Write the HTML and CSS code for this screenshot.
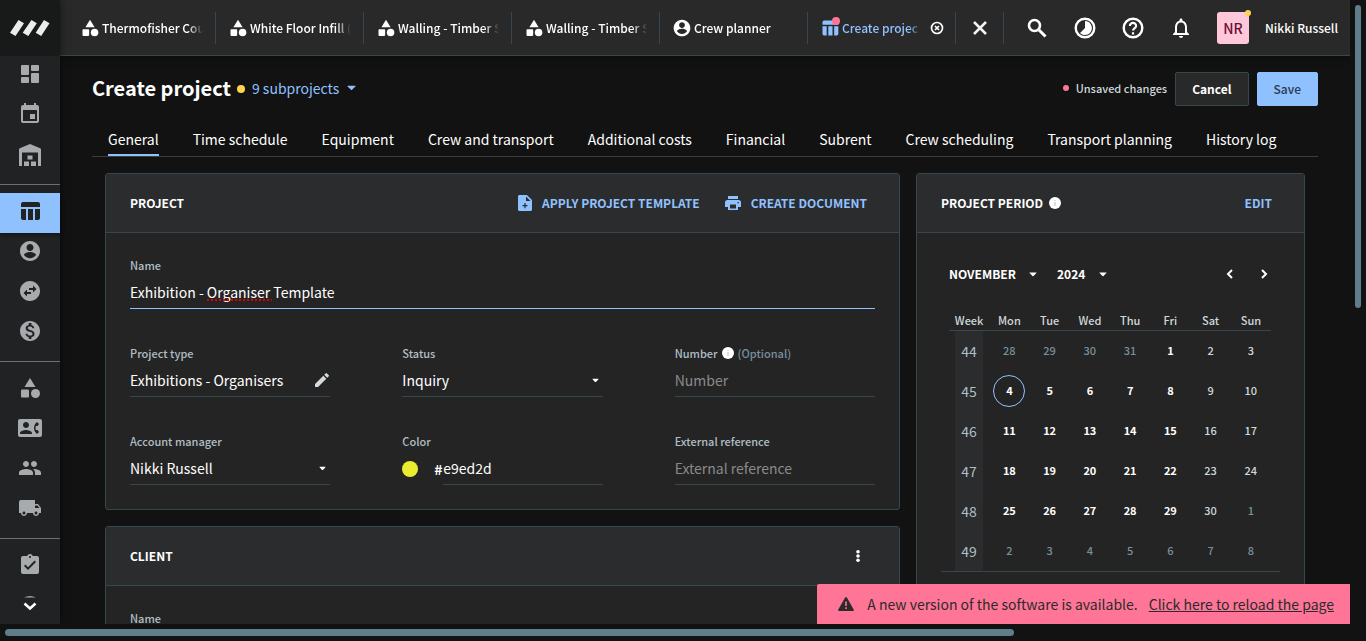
FILE: index.html
```html
<!DOCTYPE html>
<html lang="en">
<head>
<meta charset="utf-8">
<title>Create project</title>
<link rel="stylesheet" href="styles.css">
</head>
<body>
<svg class="defs" aria-hidden="true">
  <symbol id="i-shapes" viewBox="0 0 24 24"><path d="M12 2l-5.500 9h11z"/><circle cx="17.500" cy="17.500" r="4.500"/><rect x="3" y="13.500" width="8" height="8" rx="1"/></symbol>
  <symbol id="i-person" viewBox="0 0 24 24"><path d="M12 2C6.480 2 2 6.480 2 12s4.480 10 10 10 10-4.480 10-10S17.520 2 12 2zm0 3c1.930 0 3.500 1.570 3.500 3.500S13.930 12 12 12s-3.500-1.570-3.500-3.500S10.070 5 12 5zm0 14.200c-2.500 0-4.710-1.280-6-3.220.030-1.990 4-3.080 6-3.080 1.990 0 5.970 1.090 6 3.080-1.290 1.940-3.500 3.220-6 3.220z"/></symbol>
  <symbol id="i-table" viewBox="0 0 24 24"><path d="M10 10.020h5V21h-5V10.020zM17 21h3c1.100 0 2-.9 2-2v-9h-5v11zm3-18H5c-1.100 0-2 .9-2 2v3h19V5c0-1.100-.9-2-2-2zM3 19c0 1.100.9 2 2 2h3V10H3v9z"/></symbol>
  <symbol id="i-caret" viewBox="0 0 10 6"><path d="M1 0.500h8q.8 0 .3.700L5.600 5q-.6.600-1.200 0L.7 1.200Q.2.500 1 .5z"/></symbol>
  <symbol id="i-info" viewBox="0 0 12 12"><circle cx="6" cy="6" r="6"/><path d="M5.500 5h1v4h-1zM5.500 3h1v1h-1z" fill="#bbb"/></symbol>
</svg>
<div class="viewport">
  <div class="app">
    <aside class="sidebar">
      <a class="logo" href="#" aria-label="Home"><svg viewBox="0 0 40 16" width="40" height="16"><path d="M8.500 0L14 3.200 5.500 16 0 12.800zM21.500 0l5.300 3.200L18.300 16l-5.600-3.200zM34 0l5.500 3.200L31.200 16l-5.500-3.200z"/></svg></a>
      <nav class="side-nav" aria-label="Modules">
        <a class="side-item" href="#" aria-label="Dashboard"><svg viewBox="0 0 24 24"><path d="M4 3h6a1 1 0 011 1v8a1 1 0 01-1 1H4a1 1 0 01-1-1V4a1 1 0 011-1zM4 15h6a1 1 0 011 1v4a1 1 0 01-1 1H4a1 1 0 01-1-1v-4a1 1 0 011-1zM14 11h6a1 1 0 011 1v8a1 1 0 01-1 1h-6a1 1 0 01-1-1v-8a1 1 0 011-1zM14 3h6a1 1 0 011 1v4a1 1 0 01-1 1h-6a1 1 0 01-1-1V4a1 1 0 011-1z"/></svg></a>
        <a class="side-item" href="#" aria-label="Calendar"><svg viewBox="0 0 24 24"><path d="M17 12h-5v5h5v-5zM16 1v2H8V1H6v2H5c-1.110 0-1.990.9-1.990 2L3 19c0 1.100.890 2 2 2h14c1.100 0 2-.9 2-2V5c0-1.100-.9-2-2-2h-1V1h-2zm3 18H5V8h14v11z"/></svg></a>
        <a class="side-item" href="#" aria-label="Warehouse"><svg viewBox="0 -2 24 24"><path d="M1 22V5.500Q1 4.700 1.800 4.300L12 0l10.200 4.300q.8.400.8 1.200V22h-3V8.500H4V22zM9.500 11.500h5v4h-5zM6 17.500h5V22H6zM13 17.500h5V22h-5z"/></svg></a>
        <hr>
        <a class="side-item is-active" href="#" aria-label="Projects" aria-current="page"><svg><use href="#i-table"/></svg></a>
        <a class="side-item" href="#" aria-label="Crew planner"><svg><use href="#i-person"/></svg></a>
        <a class="side-item" href="#" aria-label="Subrent"><svg viewBox="0 0 24 24"><path d="M22 12c0-5.520-4.480-10-10-10S2 6.480 2 12s4.480 10 10 10 10-4.480 10-10zm-7-5.500l3.500 3.500-3.500 3.500V11h-4V9h4V6.500zm-6 11L5.500 14 9 10.500V13h4v2H9v2.500z"/></svg></a>
        <a class="side-item" href="#" aria-label="Invoices"><svg viewBox="0 0 24 24"><path d="M12 2C6.480 2 2 6.480 2 12s4.480 10 10 10 10-4.480 10-10S17.520 2 12 2zm1.410 16.090V20h-2.670v-1.930c-1.710-.360-3.160-1.460-3.270-3.400h1.960c.1 1.050.820 1.870 2.650 1.870 1.960 0 2.400-.980 2.400-1.590 0-.830-.440-1.610-2.670-2.140-2.480-.6-4.180-1.620-4.180-3.670 0-1.720 1.390-2.840 3.110-3.210V4h2.670v1.950c1.860.450 2.790 1.860 2.850 3.390H14.300c-.050-1.110-.640-1.870-2.220-1.870-1.500 0-2.400.680-2.400 1.640 0 .840.650 1.390 2.670 1.910s4.180 1.390 4.180 3.910c-.010 1.830-1.380 2.830-3.120 3.160z"/></svg></a>
        <hr>
        <a class="side-item" href="#" aria-label="Equipment"><svg><use href="#i-shapes"/></svg></a>
        <a class="side-item" href="#" aria-label="Contacts"><svg viewBox="0 0 24 24"><path d="M22 3H2C.9 3 0 3.900 0 5v14c0 1.100.9 2 2 2h20c1.100 0 2-.9 2-2V5c0-1.100-.9-2-2-2zM8 6c1.660 0 3 1.340 3 3s-1.340 3-3 3-3-1.340-3-3 1.340-3 3-3zm6 12H2v-1c0-2 4-3.100 6-3.100s6 1.100 6 3.100v1zm3.850-4h1.640L21 16l-1.990 1.990A7.500 7.500 0 0116.280 14c-.180-.640-.280-1.310-.280-2s.1-1.360.280-2a7.500 7.500 0 012.730-3.990L21 8l-1.510 2h-1.640c-.220.630-.350 1.300-.350 2s.130 1.370.350 2z"/></svg></a>
        <a class="side-item" href="#" aria-label="Crew"><svg viewBox="0 0 24 24"><path d="M16 11c1.660 0 2.990-1.340 2.990-3S17.660 5 16 5s-3 1.340-3 3 1.340 3 3 3zm-8 0c1.660 0 2.990-1.340 2.990-3S9.660 5 8 5 5 6.340 5 8s1.340 3 3 3zm0 2c-2.330 0-7 1.170-7 3.500V19h14v-2.500c0-2.330-4.670-3.500-7-3.500zm8 0c-.290 0-.620.020-.970.050 1.160.840 1.970 1.970 1.970 3.450V19h6v-2.500c0-2.330-4.670-3.500-7-3.500z"/></svg></a>
        <a class="side-item" href="#" aria-label="Vehicles"><svg viewBox="0 0 24 24"><path d="M20 8h-3V4H3c-1.100 0-2 .9-2 2v11h2c0 1.660 1.340 3 3 3s3-1.340 3-3h6c0 1.660 1.340 3 3 3s3-1.340 3-3h2v-5l-3-4zM6 18.500c-.830 0-1.500-.670-1.500-1.500s.670-1.500 1.500-1.500 1.500.670 1.500 1.500-.670 1.500-1.500 1.500zm13.500-9l1.960 2.500H17V9.500h2.500zm-1.500 9c-.830 0-1.500-.670-1.500-1.500s.670-1.500 1.500-1.500 1.500.670 1.500 1.500-.670 1.500-1.500 1.500z"/></svg></a>
        <hr>
        <a class="side-item" href="#" aria-label="Tasks"><svg viewBox="0 0 24 24"><path d="M19 3h-4.180C14.400 1.840 13.300 1 12 1c-1.300 0-2.400.840-2.820 2H5c-1.100 0-2 .9-2 2v14c0 1.100.9 2 2 2h14c1.100 0 2-.9 2-2V5c0-1.100-.9-2-2-2zm-7 0c.550 0 1 .450 1 1s-.450 1-1 1-1-.450-1-1 .450-1 1-1zm-2 14l-4-4 1.410-1.410L10 14.170l6.590-6.590L18 9l-8 8z"/></svg></a>
        <button class="side-more" type="button" aria-label="More"><svg viewBox="0 0 14 16" width="14" height="16"><path d="M1 2.500Q7-.5 13 2.500z" fill="#a8abad"/><path d="M1.500 8.500L7 13.500l5.500-5" fill="none" stroke="#fff" stroke-width="2.500"/></svg></button>
      </nav>
    </aside>
    <div class="page">
      <header class="topbar">
        <nav class="open-tabs" aria-label="Open pages">
          <a class="open-tab" href="#"><svg><use href="#i-shapes"/></svg><span>Thermofisher Cou</span></a>
          <a class="open-tab" href="#"><svg><use href="#i-shapes"/></svg><span>White Floor Infill (</span></a>
          <a class="open-tab" href="#"><svg><use href="#i-shapes"/></svg><span>Walling - Timber S</span></a>
          <a class="open-tab" href="#"><svg><use href="#i-shapes"/></svg><span>Walling - Timber S</span></a>
          <a class="open-tab" href="#"><svg><use href="#i-person"/></svg><span>Crew planner</span></a>
          <div class="open-tab is-current"><svg><use href="#i-table"/></svg><i class="tab-dot"></i><span>Create projec</span><button type="button" aria-label="Close tab"><svg viewBox="0 0 14 14" stroke="#fff"><circle cx="7" cy="7" r="5.500" stroke-width="1.700"/><path d="M5 5l4 4M9 5L5 9" stroke-width="1.700"/></svg></button></div>
        </nav>
        <button class="close-all" type="button" aria-label="Close all tabs"><svg viewBox="0 0 16 16" width="16" height="16"><path d="M2 2l12 12M14 2L2 14" stroke="#f2f2f2" stroke-width="2.500"/></svg></button>
        <div class="tools">
          <button type="button" aria-label="Search"><svg viewBox="0 0 24 24"><circle cx="9.500" cy="9.500" r="5.500" fill="none" stroke="#fff" stroke-width="2.600"/><path d="M14 14l6.500 6.500" stroke="#fff" stroke-width="3"/></svg></button>
          <button type="button" aria-label="Time registration"><svg viewBox="0 0 24 24"><circle cx="12" cy="12" r="9.300" fill="none" stroke="#fff" stroke-width="2.400"/><path d="M12 5v7l-5 5a7 7 0 105-12z"/></svg></button>
          <button type="button" aria-label="Help"><svg viewBox="0 0 24 24"><circle cx="12" cy="12" r="9.300" fill="none" stroke="#fff" stroke-width="2.400"/><path fill="none" stroke="#fff" d="M8.900 10a3.100 3.100 0 116.200 0c0 2-3.100 2.200-3.100 4.600M12 16.200v2.200" stroke-width="2.200"/></svg></button>
          <button type="button" aria-label="Notifications"><svg viewBox="0 0 24 24"><path d="M12 22c1.100 0 2-.9 2-2h-4c0 1.100.9 2 2 2zm6-6v-5c0-3.070-1.630-5.640-4.500-6.320V4c0-.830-.670-1.500-1.500-1.500s-1.500.670-1.500 1.500v.680C7.640 5.360 6 7.920 6 11v5l-2 2v1h16v-1l-2-2zm-2 1H8v-6c0-2.480 1.510-4.500 4-4.500s4 2.020 4 4.500v6z"/></svg></button>
        </div>
        <button class="user" type="button"><span class="avatar">NR<i class="status-dot"></i></span><span>Nikki Russell</span></button>
      </header>
      <main class="main">
        <div class="title-row">
          <h1>Create project</h1>
          <i class="dot dot-yellow"></i>
          <button class="subprojects" type="button">9 subprojects<svg width="9" height="6"><use href="#i-caret"/></svg></button>
          <p class="unsaved"><i class="dot dot-pink"></i>Unsaved changes</p>
          <button class="btn" type="button">Cancel</button>
          <button class="btn btn-primary" type="button">Save</button>
        </div>
        <nav class="section-tabs" aria-label="Project sections">
          <a class="is-selected" href="#">General</a><a href="#">Time schedule</a><a href="#">Equipment</a><a href="#">Crew and transport</a><a href="#">Additional costs</a><a href="#">Financial</a><a href="#">Subrent</a><a href="#">Crew scheduling</a><a href="#">Transport planning</a><a href="#">History log</a>
        </nav>
        <div class="columns">
          <div class="column">
            <section class="card">
              <header class="card-head">
                <h2>Project</h2>
                <button class="link-btn" type="button"><svg viewBox="0 0 14 16" width="14" height="16"><path fill-rule="evenodd" d="M2 0h7l5 5v9.500a1.500 1.500 0 01-1.500 1.500h-11A1.500 1.500 0 010 14.500v-13A1.500 1.500 0 012 0zM8 1.500V6h4.500zM6.400 8v2H4.500v1.200h1.900v2h1.200v-2h1.900V10H7.600V8z"/></svg>Apply project template</button>
                <button class="link-btn" type="button"><svg viewBox="0 0 16 14" width="16" height="14"><path fill-rule="evenodd" d="M3 0h10v3H3zM2.500 4h11A2.500 2.500 0 0116 6.500V11h-3v3H3v-3H0V6.500A2.500 2.500 0 012.500 4zM5 8.500v4h6v-4zM12.500 6v1.200h1.300V6z"/></svg>Create document</button>
              </header>
              <div class="card-body form">
                <div class="field field-wide is-focused">
                  <label for="name">Name</label>
                  <div class="control"><input id="name" type="text" value="Exhibition - Organiser Template" spellcheck="false"><i class="misspelled"></i></div>
                </div>
                <div class="field">
                  <label for="type">Project type</label>
                  <div class="control"><input id="type" type="text" value="Exhibitions - Organisers" readonly><button class="edit" type="button" aria-label="Edit project type"><svg viewBox="0 0 14 14" width="14" height="14"><path d="M0 11L8.300 2.700l3 3L3 14H0zM9.200 1.800L10.600.4q.7-.7 1.400 0l1.600 1.600q.7.700 0 1.400l-1.400 1.400z"/></svg></button></div>
                </div>
                <div class="field">
                  <label for="status">Status</label>
                  <div class="control"><select id="status"><option>Inquiry</option></select><svg class="caret" width="7" height="5"><use href="#i-caret"/></svg></div>
                </div>
                <div class="field">
                  <label for="number">Number <svg width="12" height="12"><use href="#i-info"/></svg> <span class="optional">(Optional)</span></label>
                  <div class="control"><input id="number" type="text" placeholder="Number"></div>
                </div>
                <div class="field">
                  <label for="manager">Account manager</label>
                  <div class="control"><select id="manager"><option>Nikki Russell</option></select><svg class="caret" width="7" height="5"><use href="#i-caret"/></svg></div>
                </div>
                <div class="field">
                  <label for="color">Color</label>
                  <div class="color-control"><i class="swatch"></i><span class="hash">#</span><div class="control"><input id="color" type="text" value="e9ed2d"></div></div>
                </div>
                <div class="field">
                  <label for="external">External reference</label>
                  <div class="control"><input id="external" type="text" placeholder="External reference"></div>
                </div>
              </div>
            </section>
            <section class="card">
              <header class="card-head">
                <h2>Client</h2>
                <button class="kebab" type="button" aria-label="Client actions"><svg viewBox="0 0 4 12" width="4" height="12"><circle cx="2" cy="1.800" r="1.800"/><circle cx="2" cy="6" r="1.800"/><circle cx="2" cy="10.200" r="1.800"/></svg></button>
              </header>
              <div class="card-body form">
                <div class="field field-wide"><label for="client">Name</label><div class="control"><input id="client" type="text"></div></div>
              </div>
            </section>
          </div>
          <section class="card">
            <header class="card-head">
              <h2>Project period <svg width="12" height="12"><use href="#i-info"/></svg></h2>
              <button class="link-btn" type="button">Edit</button>
            </header>
            <div class="card-body">
              <div class="calendar">
                <div class="calendar-nav">
                  <span class="picker"><select aria-label="Month"><option>NOVEMBER</option></select><svg width="8" height="5"><use href="#i-caret"/></svg></span>
                  <span class="picker"><select aria-label="Year"><option>2024</option></select><svg width="8" height="5"><use href="#i-caret"/></svg></span>
                  <span class="steps">
                    <button type="button" aria-label="Previous month"><svg viewBox="0 0 8 10" width="8" height="10"><path d="M6 1L2 5l4 4"/></svg></button>
                    <button type="button" aria-label="Next month"><svg viewBox="0 0 8 10" width="8" height="10"><path d="M2 1l4 4-4 4"/></svg></button>
                  </span>
                </div>
                <table>
                  <thead><tr><th>Week</th><th>Mon</th><th>Tue</th><th>Wed</th><th>Thu</th><th>Fri</th><th>Sat</th><th>Sun</th></tr></thead>
                  <tbody>
                    <tr><th>44</th><td class="out">28</td><td class="out">29</td><td class="out">30</td><td class="out">31</td><td>1</td><td>2</td><td>3</td></tr>
                    <tr><th>45</th><td class="today"><span>4</span></td><td>5</td><td>6</td><td>7</td><td>8</td><td>9</td><td>10</td></tr>
                    <tr><th>46</th><td>11</td><td>12</td><td>13</td><td>14</td><td>15</td><td>16</td><td>17</td></tr>
                    <tr><th>47</th><td>18</td><td>19</td><td>20</td><td>21</td><td>22</td><td>23</td><td>24</td></tr>
                    <tr><th>48</th><td>25</td><td>26</td><td>27</td><td>28</td><td>29</td><td>30</td><td class="out">1</td></tr>
                    <tr><th>49</th><td class="out">2</td><td class="out">3</td><td class="out">4</td><td class="out">5</td><td class="out">6</td><td class="out">7</td><td class="out">8</td></tr>
                  </tbody>
                </table>
              </div>
            </div>
          </section>
        </div>
      </main>
    </div>
    <div class="toast" role="status"><svg viewBox="0 0 16 14" width="16" height="14"><path fill="#2b2b2b" d="M7 .8q1-1.600 2 0l6.700 11.600q.8 1.600-1 1.600H1.300q-1.800 0-1-1.600z"/><path fill="#ff7597" d="M7.200 4.500h1.600V9H7.200zM7.200 10.300h1.600v1.600H7.200z"/></svg><span>A new version of the software is available.</span><a href="#">Click here to reload the page</a></div>
  </div>
  <div class="scroll scroll-y"><i></i></div>
  <div class="scroll scroll-x"><i></i></div>
</div>
</body>
</html>
```
FILE: styles.css
```css
* { box-sizing: border-box; }
body {
  margin: 0;
  background: #121212;
  color: #fff;
  font: 14px/20px "Noto Sans CJK SC", "Open Sans", sans-serif;
}
.defs { display: none; }
a { color: inherit; text-decoration: none; }
button, input, select {
  font: inherit;
  color: inherit;
  background: none;
  border: 0;
  padding: 0;
  margin: 0;
  outline: 0;
  border-radius: 0;
}
select { appearance: none; }
svg { display: block; fill: currentColor; flex: none; }
h1, h2, p { margin: 0; }

.viewport {
  display: grid;
  grid-template: minmax(0, 1fr) 17px / minmax(0, 1fr) 16px;
  height: 100vh;
}
.app { position: relative; display: flex; overflow: hidden; }
.scroll-y { padding: 5px 5px 0; }
.scroll-x { grid-row: 2; padding: 5px 0 0 5px; }
.scroll i { display: block; background: #607d8b; border-radius: 4px; }
.scroll-y i { width: 6px; height: 49%; }
.scroll-x i { width: 75%; height: 7px; }

/* Sidebar */
.sidebar {
  flex: none;
  width: 60px;
  background: #202224;
  color: #a8abad;
  box-shadow: 0 0 8px rgba(0, 0, 0, .5);
  z-index: 1;
}
.logo {
  display: flex;
  align-items: center;
  justify-content: center;
  height: 56px;
  background: #181a19;
  color: #ececec;
}
.side-item {
  display: flex;
  align-items: center;
  justify-content: center;
  height: 40px;
  padding-bottom: 4px;
}
.side-item svg { width: 24px; height: 24px; }
.side-item.is-active {
  background: #90c1ff;
  color: #212325;
  box-shadow: 0 2px 4px rgba(0, 0, 0, .4);
}
.side-nav hr { margin: 8px 0; border: 0; border-top: 1px solid #6e7072; }
.side-more { display: flex; justify-content: center; width: 100%; padding-top: 8px; }

/* Top bar */
.page { flex: 1; min-width: 0; }
.topbar {
  display: flex;
  align-items: center;
  height: 56px;
  padding: 0 12px 0 8px;
  background: #292929;
  border-bottom: 1px solid #37474f;
  box-shadow: 0 2px 8px rgba(0, 0, 0, .4);
  font-size: 12px;
  font-weight: 500;
}
.open-tabs { display: flex; }
.open-tab {
  position: relative;
  display: flex;
  align-items: center;
  gap: 2px;
  width: 148px;
  height: 32px;
  padding: 0 12px 0 12px;
  border-right: 1px solid #37474f;
}
.open-tab > svg { width: 20px; height: 20px; }
.open-tab span {
  flex: 1;
  overflow: hidden;
  white-space: nowrap;
  mask-image: linear-gradient(to right, #000 85%, transparent);
}
.open-tab.is-current { padding-right: 11px; color: #90c1ff; }
.tab-dot {
  position: absolute;
  left: 24px;
  top: 5px;
  width: 8px;
  height: 8px;
  border-radius: 50%;
  background: #ff7597;
}
.open-tab button { margin-left: 7px; }
.open-tab button svg { width: 14px; height: 14px; fill: none; }
.close-all {
  display: flex;
  align-items: center;
  justify-content: center;
  width: 48px;
  height: 32px;
  border-right: 1px solid #37474f;
}
.tools { display: flex; margin-left: auto; }
.tools button { display: flex; justify-content: center; width: 48px; }
.tools svg { width: 24px; height: 24px; }
.user { display: flex; align-items: center; gap: 16px; padding-left: 12px; }
.avatar {
  position: relative;
  width: 32px;
  height: 32px;
  border-radius: 3px;
  background: #ffc8da;
  color: #6d0f35;
  font-size: 14px;
  line-height: 32px;
}
.status-dot {
  position: absolute;
  right: -2px;
  top: -2px;
  width: 6px;
  height: 6px;
  border-radius: 50%;
  background: #ffd54f;
}

/* Page heading */
.main { padding: 16px 32px 0; }
.title-row { display: flex; align-items: center; height: 34px; }
h1 { padding-bottom: 2px; font-size: 20px; line-height: 32px; }
.dot { display: block; border-radius: 50%; }
.dot-yellow { width: 8px; height: 8px; margin: 0 7px 0 6px; background: #ffd54f; }
.dot-pink { width: 6px; height: 6px; background: #ff7597; }
.subprojects { display: flex; align-items: center; gap: 8px; padding-bottom: 2px; color: #90c1ff; }
.unsaved {
  display: flex;
  align-items: center;
  gap: 7px;
  margin-left: auto;
  padding-bottom: 2px;
  color: #cfd8dc;
  font-size: 11px;
  font-weight: 500;
}
.btn {
  height: 34px;
  margin-left: 8px;
  padding: 0 16px;
  border: 1px solid #37474f;
  border-radius: 2px;
  background: #292929;
  font-size: 12px;
  font-weight: 700;
}
.btn-primary { background: #90c1ff; border-color: #90c1ff; color: #2b3a4d; font-weight: 500; }
.section-tabs {
  display: flex;
  gap: 34px;
  margin-top: 18px;
  padding: 0 16px;
  border-bottom: 1px solid #3d3d3d;
  white-space: nowrap;
}
.section-tabs a { padding: 5px 0; border-bottom: 2px solid transparent; }
.section-tabs .is-selected { border-color: #90c1ff; }

/* Cards */
.columns {
  display: grid;
  grid-template-columns: 795fr 389fr;
  gap: 16px;
  padding: 16px 13px;
}
.column { display: grid; gap: 16px; align-content: start; }
.card { border: 1px solid #37474f; border-radius: 3px; background: #242424; }
.card-head {
  display: flex;
  align-items: center;
  gap: 25px;
  height: 59px;
  padding: 0 32px 0 24px;
  background: #2b2c2e;
  border-bottom: 1px solid #37474f;
  font-size: 12px;
  font-weight: 700;
  text-transform: uppercase;
}
.card-head h2 { display: flex; align-items: center; gap: 6px; margin-right: auto; font-size: inherit; }
.link-btn {
  display: flex;
  align-items: center;
  gap: 10px;
  color: #90c1ff;
  font-weight: 700;
  text-transform: uppercase;
}
.kebab { width: 18px; height: 20px; display: flex; justify-content: center; align-items: center; }
.card-body { padding: 23px 24px 24px; }
.form { display: grid; grid-template-columns: repeat(3, minmax(0, 1fr)); gap: 35px 72px; }
.field-wide { grid-column: 1 / -1; }
.field label {
  display: flex;
  align-items: center;
  gap: 4px;
  height: 20px;
  padding-bottom: 2px;
  color: #b0bec5;
  font-size: 11px;
  font-weight: 500;
}
.field label svg { color: #fff; }
.optional { color: #78909c; }
.control {
  position: relative;
  display: flex;
  align-items: center;
  flex: 1;
  height: 33px;
  border-bottom: 1px solid #37474f;
}
.is-focused .control { border-color: #90c1ff; }
.control input, .control select { flex: 1; width: 100%; min-width: 0; height: 32px; }
.control input::placeholder { color: #8a8a8a; opacity: 1; }
.control .caret { margin-right: 4px; }
.edit { margin-right: 1px; color: #d5dadd; }
.misspelled {
  position: absolute;
  left: 77px;
  top: 23px;
  width: 65px;
  height: 2px;
  background: repeating-linear-gradient(to right, #e00000 0 2px, transparent 2px 4px);
}
.color-control { display: flex; align-items: center; }
.swatch { width: 16px; height: 16px; border-radius: 50%; background: #e9ed2d; }
.hash { width: 9px; margin-left: 16px; font-weight: 700; }

/* Calendar */
.calendar { padding: 0 9px 0 8px; border-bottom: 1px solid #37474f; }
.calendar-nav {
  display: flex;
  align-items: center;
  gap: 20px;
  height: 36px;
  margin-bottom: 18px;
  font-size: 12px;
  font-weight: 700;
}
.picker { display: flex; align-items: center; gap: 13px; }
.steps { display: flex; gap: 26px; margin: 0 3px 0 auto; }
.steps svg { fill: none; stroke: #fff; stroke-width: 2; }
table { width: 100%; table-layout: fixed; border-collapse: collapse; text-align: center; font-size: 11px; font-weight: 700; }
th, td { padding: 0; }
td { padding-bottom: 2px; }
thead th { height: 20px; color: #cfd8dc; border-bottom: 1px solid #37474f; font-weight: 500; }
tbody th {
  height: 40px;
  background: linear-gradient(#2b2c2e, #2b2c2e) center / 28px 100% no-repeat;
  color: #b0bec5;
  font-size: 14px;
  font-weight: 400;
}
tbody td:nth-last-child(-n+2) { color: #cfd8dc; font-weight: 500; }
tbody td.out { color: #78909c; font-weight: 500; }
.today { padding: 0; }
.today span {
  display: block;
  width: 32px;
  height: 32px;
  margin: 0 auto;
  border: 1px solid #90c1ff;
  border-radius: 50%;
  line-height: 28px;
}

/* Update notice */
.toast {
  position: absolute;
  right: 0;
  bottom: 0;
  z-index: 2;
  display: flex;
  align-items: center;
  gap: 11px;
  height: 40px;
  padding: 0 16px 0 21px;
  border-radius: 2px 0 0 0;
  background: #ff7597;
  color: #2b2b2b;
}
.toast svg { margin-right: 2px; }
.toast a { text-decoration: underline; }
```
